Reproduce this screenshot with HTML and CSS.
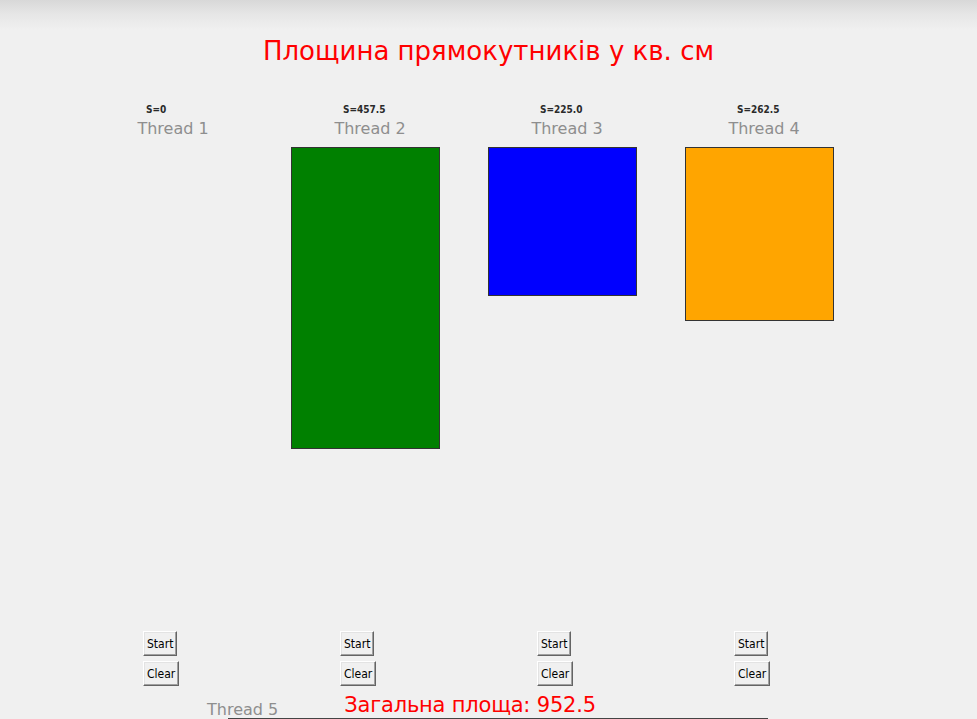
FILE: index.html
```html
<!DOCTYPE html>
<html lang="uk">
<head>
    <meta charset="UTF-8">
    <title>Площина прямокутників</title>
    <link rel="stylesheet" href="styles.css">
</head>
<body>
    <h1 class="title">Площина прямокутників у кв. см</h1>

    <div class="threads">
        <div class="thread">
            <div class="area-label">S=0</div>
            <div class="thread-name">Thread 1</div>
            <div class="canvas"></div>
            <button class="tk-btn">Start</button>
            <button class="tk-btn">Clear</button>
        </div>
        <div class="thread">
            <div class="area-label">S=457.5</div>
            <div class="thread-name">Thread 2</div>
            <div class="canvas"><div class="rect green" style="height: 302px"></div></div>
            <button class="tk-btn">Start</button>
            <button class="tk-btn">Clear</button>
        </div>
        <div class="thread">
            <div class="area-label">S=225.0</div>
            <div class="thread-name">Thread 3</div>
            <div class="canvas"><div class="rect blue" style="height: 149px"></div></div>
            <button class="tk-btn">Start</button>
            <button class="tk-btn">Clear</button>
        </div>
        <div class="thread">
            <div class="area-label">S=262.5</div>
            <div class="thread-name">Thread 4</div>
            <div class="canvas"><div class="rect orange" style="height: 174px"></div></div>
            <button class="tk-btn">Start</button>
            <button class="tk-btn">Clear</button>
        </div>
    </div>

    <div class="footer">
        <span class="thread-name thread5">Thread 5</span>
        <span class="total">Загальна площа: 952.5</span>
    </div>
    <div class="canvas-edge"></div>
</body>
</html>
```

FILE: styles.css
```css
html, body {
    height: 719px;
    overflow: hidden;
}

body {
    margin: 0;
    font-family: 'DejaVu Sans', sans-serif;
    background: linear-gradient(#d8d8d8 0, #e6e6e6 14px, #f0f0f0 30px) no-repeat #f0f0f0;
}

.title {
    margin: 36px 0 0;
    font-size: 26px;
    line-height: 30px;
    font-weight: normal;
    color: #ff0000;
    text-align: center;
}

.threads {
    display: flex;
    padding-left: 94px;
    margin-top: 37px;
}

.thread {
    width: 197px;
    display: flex;
    flex-direction: column;
    align-items: flex-start;
}

.area-label {
    margin-left: 52px;
    font-family: 'DejaVu Sans Condensed', 'DejaVu Sans', sans-serif;
    font-size: 10px;
    font-weight: bold;
    line-height: 13px;
    color: #2a2a2a;
}

.thread-name {
    font-size: 16px;
    line-height: 18px;
    color: #8e8e8e;
}

.thread .thread-name {
    width: 149px;
    padding-left: 9px;
    box-sizing: border-box;
    margin-top: 4px;
    text-align: center;
}

.canvas {
    width: 149px;
    height: 484px;
    margin-top: 9px;
}

.rect {
    width: 100%;
    box-sizing: border-box;
    border: 1px solid #333;
}

.green { background: #008000; }
.blue { background: #0000ff; }
.orange { background: #ffa500; }

.tk-btn {
    margin-left: 49px;
    height: 25px;
    padding: 0 3px;
    font-family: 'DejaVu Sans Condensed', 'DejaVu Sans', sans-serif;
    font-size: 12px;
    color: #000;
    background: #f0f0f0;
    border: 1px solid;
    border-color: #fff #646464 #646464 #fff;
    box-shadow: inset -1px -1px 0 #a0a0a0, inset 1px 1px 0 #e3e3e3;
}

.tk-btn + .tk-btn {
    margin-top: 5px;
}

.footer {
    display: flex;
    margin-top: 7px;
    height: 24px;
}

.thread5 {
    margin: 8px 0 0 207px;
}

.total {
    margin-left: 66px;
    font-size: 21px;
    line-height: 24px;
    color: #ff0000;
    letter-spacing: -0.2px;
}

.canvas-edge {
    width: 540px;
    margin: 1px 0 0 228px;
    border-top: 1px solid #444;
}
```
